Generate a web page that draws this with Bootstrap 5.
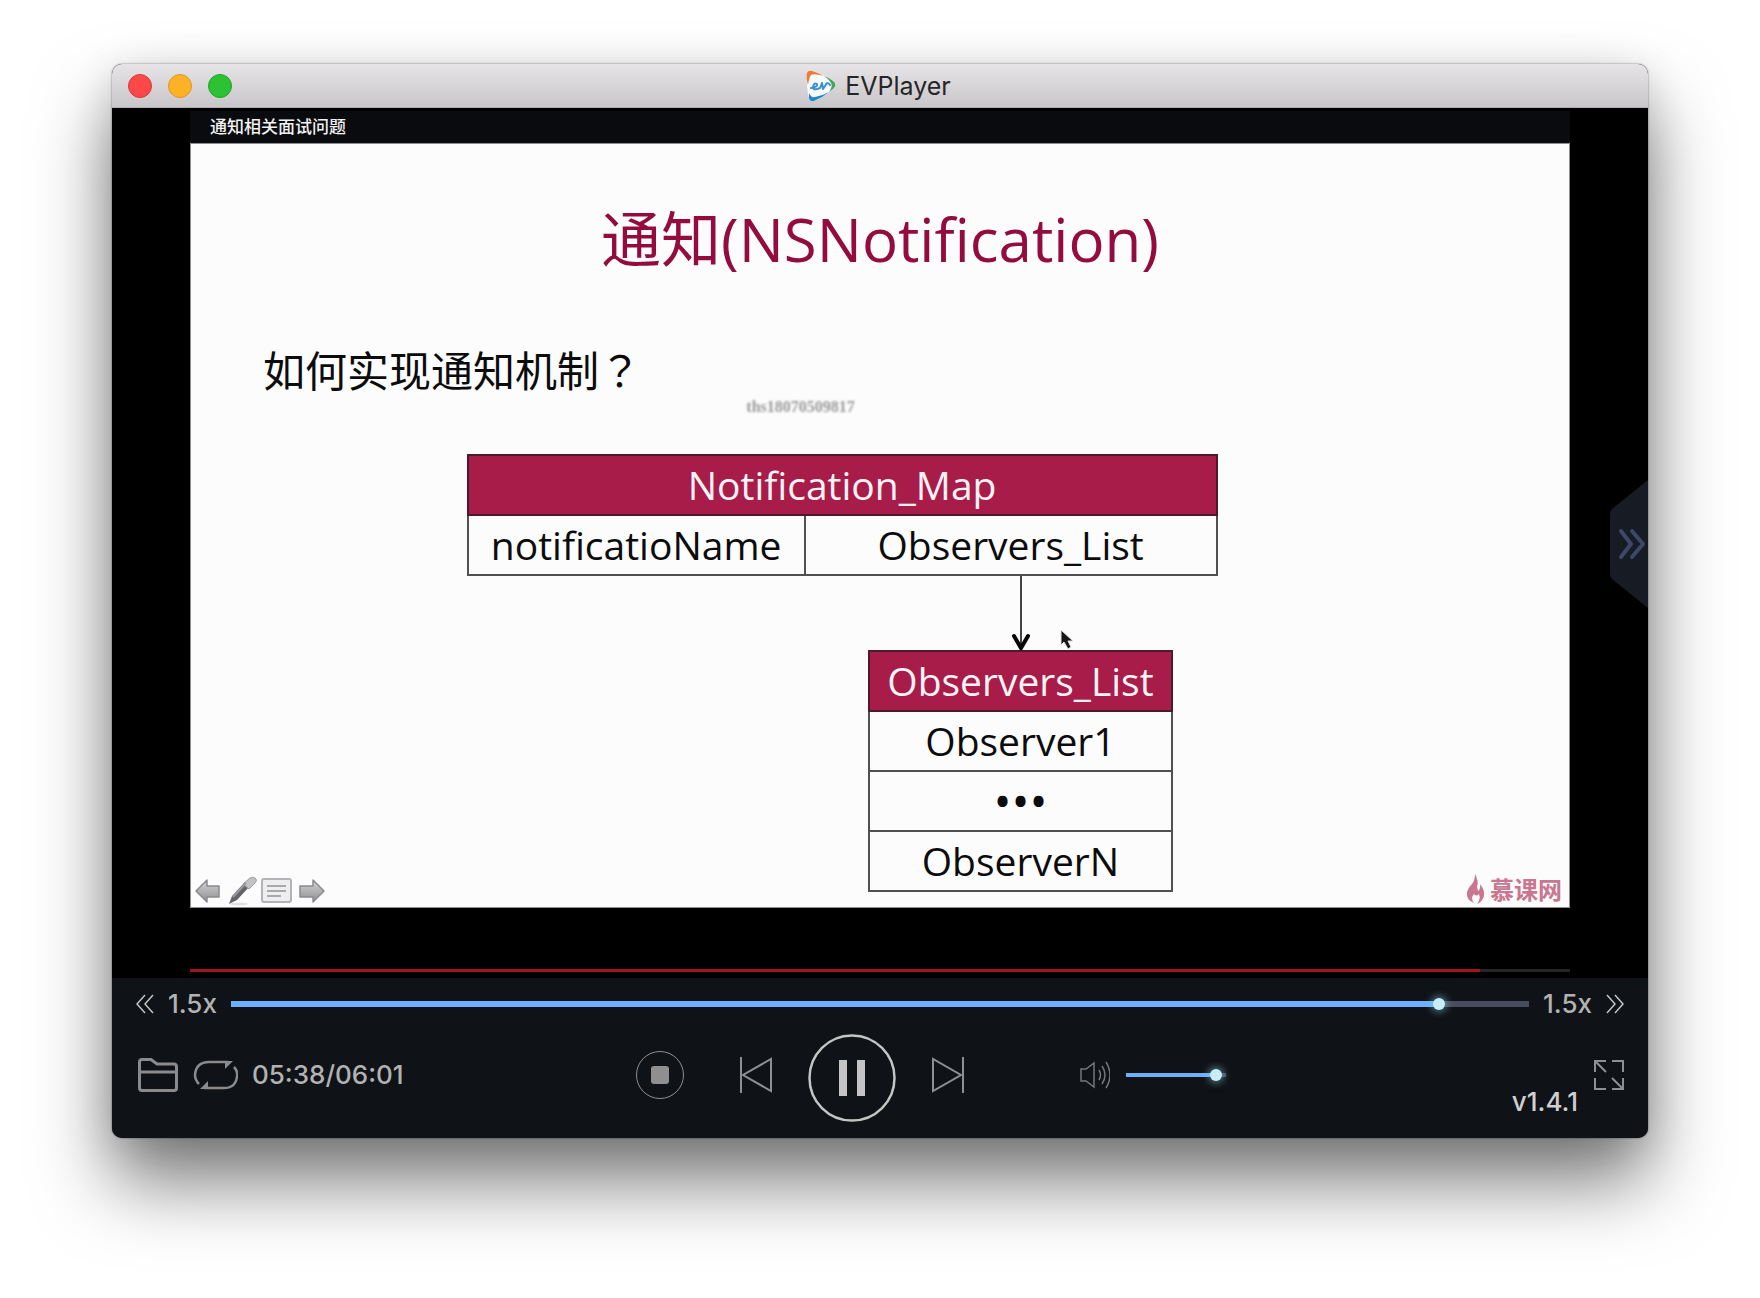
<!DOCTYPE html>
<html lang="zh-CN">
<head>
<meta charset="utf-8">
<meta name="viewport" content="width=device-width, initial-scale=1">
<title>EVPlayer</title>
<link rel="stylesheet" href="https://cdn.jsdelivr.net/npm/bootstrap@5.3.0/dist/css/bootstrap.min.css">
<style>
  body { background: #fff; font-family: Inter, "Noto Sans CJK SC", sans-serif; }
  .stage { min-height: 100vh; padding: 64px 112px 96px; }
  .player { border-radius: 10px; overflow: hidden; background: #000; }
  .player-shadow { border-radius: 10px; box-shadow: 0 0 2px rgba(0,0,0,.55), 0 44px 76px rgba(0,0,0,.52), 0 6px 40px rgba(0,0,0,.12); }
  .titlebar { display: grid; grid-template-columns: 1fr auto 1fr; height: 44px; padding: 0 20px 0 16px; background: linear-gradient(#e6e4e7, #c9c6ca); border-bottom: 1px solid #aeacb0; }
  .light { width: 24px; height: 24px; border-radius: 50%; padding: 0; border: 1px solid; }
  .light-close { background: #fc4848; border-color: #df3636; }
  .light-min { background: #fdb226; border-color: #dd981c; }
  .light-zoom { background: #2bc233; border-color: #1fa527; }
  .app-name { font-size: 25px; line-height: 32px; color: #262626; }
  .screen { padding: 3px 78px 6px; }
  .caption-bar { background: #0a0b0e; color: #f2f2f2; font: 500 17px/30px "Noto Sans CJK SC", sans-serif; padding: 0 20px 2px; }
  .slide { background: #fcfcfd; border: 1px solid #8c8f90; color: #0c0c0c; font-family: "Open Sans", "Noto Sans CJK SC", sans-serif; padding: 55px 0 15px; }
  .slide-title { font-size: 60px; line-height: 80px; color: #940b3d; margin: 0 0 60px; font-weight: 400; }
  .slide-question { font-size: 42px; line-height: 60px; margin: 0 0 53px; padding-left: 72px; }
  .centered-mark { font-family: "Noto Sans CJK TC", sans-serif; }
  .watermark { left: 40.3%; top: 251px; font: bold 16px/24px "Liberation Serif", serif; color: #9a9a9a; filter: blur(1px); }
  .diagram { margin-left: 20%; width: 54.5%; }
  .sheet { width: 100%; table-layout: fixed; border-collapse: collapse; font-size: 39px; line-height: 52px; text-align: center; }
  .sheet th, .sheet td { height: 60px; padding: 0; border: 2px solid #505052; font-weight: 400; }
  .sheet th { background: #a71c48; color: #fdf3f7; border-color: #4b1a2c; }
  .sheet .dots { font-size: 48px; }
  .name-col { width: 45%; }
  .linked { margin-left: 53.5%; width: 40.5%; }
  .slide-tools { left: 3px; bottom: 1px; gap: 3px; }
  .tool { padding: 0; border: 0; background: none; line-height: 0; color: inherit; }
  .brand-mark { right: 7px; bottom: 2px; color: #c97690; font: bold 24px/32px "Noto Sans CJK SC", sans-serif; }
  .load-line { height: 3px; margin-top: 61px; border-radius: 0; background: #262628; }
  .load-line .progress-bar { background: #a0141c; }
  .side-tab { right: 0; top: 372px; }
  .controls { background: #0f1216; color: #b2b2b2; padding: 8px 24px 16px; font-size: 26px; font-weight: 500; line-height: 38px; }
  .seek-row { height: 36px; gap: 14px; }
  .deck { padding: 6px 0 0 2px; }
  .deck-left { flex: 5 1 0; gap: 14px; }
  .deck-right { flex: 4 1 0; gap: 16px; }
  .transport { gap: 36px; margin-right: 114px; }
  .stop-btn { margin-right: 20px; }
  .play-btn { margin-top: 6px; }
  .version { line-height: 40px; color: #cfcfcf; }
  .slider { appearance: none; -webkit-appearance: none; display: block; margin: 0; background: none; height: 24px; min-width: 0; }
  .slider::-webkit-slider-runnable-track { height: var(--track); background: linear-gradient(90deg, #6cb0fb var(--fill), #474d5e var(--fill)); }
  .slider::-webkit-slider-thumb { -webkit-appearance: none; width: 12px; height: 12px; margin-top: calc((var(--track) - 12px) / 2); border-radius: 50%; background: #c8ecf8; box-shadow: 0 0 8px 1px rgba(140,210,240,.7); }
  .seek { --track: 6px; --fill: 93%; }
  .volume { --track: 4px; --fill: 92%; width: 100px; }
</style>
<script src="https://cdn.jsdelivr.net/npm/bootstrap@5.3.0/dist/js/bootstrap.bundle.min.js"></script>
</head>
<body>
<div class="stage">
 <div class="player-shadow">
 <main class="player">
  <header class="titlebar align-items-center">
    <div class="d-flex gap-3">
      <button class="light light-close" type="button" aria-label="Close"></button>
      <button class="light light-min" type="button" aria-label="Minimize"></button>
      <button class="light light-zoom" type="button" aria-label="Zoom"></button>
    </div>
    <div class="d-flex align-items-center gap-2">
      <svg width="32" height="34" viewBox="0 0 32 34" aria-hidden="true">
        <path d="M2 5Q2 1 6 2Q19 5 28 12Q32 15 28 19Q20 28 9 32Q5 33 4 29Q1 17 2 5Z" fill="#f8fbfd"/>
        <path d="M3 16Q1 9 2 4Q3 1 7 2Q14 4 19 7Q9 4 6 6Q4 9 3 16Z" fill="#f07a35"/>
        <path d="M19 7Q25 9 28 12Q32 15 29 19L24 23Q28 17 26 14Q24 10 19 7Z" fill="#45a45a"/>
        <path d="M4 24Q6 29 10 28Q17 27 24 23Q17 29 9 32Q5 33 4 29Z" fill="#2186ca"/>
        <path d="M6 19Q13 18 12 15Q9 13 8 18Q8 22 15 19L17 14L18 20L22 14Q24 14 25 16" fill="none" stroke="#3a91cd" stroke-width="2" stroke-linecap="round" stroke-linejoin="round"/>
      </svg>
      <span class="app-name">EVPlayer</span>
    </div>
    <div></div>
  </header>

  <section class="screen position-relative">
    <div class="caption-bar">通知相关面试问题</div>
    <article class="slide position-relative">
      <h1 class="slide-title text-center">通知(NSNotification)</h1>
      <p class="slide-question">如何实现通知机制<span class="centered-mark" lang="zh-TW">？</span></p>
      <span class="watermark position-absolute">ths18070509817</span>
      <div class="diagram">
        <table class="sheet">
          <colgroup><col class="name-col"><col></colgroup>
          <thead><tr><th colspan="2">Notification_Map</th></tr></thead>
          <tbody><tr><td>notificatioName</td><td>Observers_List</td></tr></tbody>
        </table>
        <div class="linked d-flex flex-column align-items-center">
          <svg class="d-block" width="76" height="74" viewBox="-30 0 76 74" overflow="visible" aria-hidden="true">
            <path d="M9 0V71" stroke="#444" stroke-width="2"/>
            <path d="M2 60L9 72L16 60" fill="none" stroke="#080808" stroke-width="4" stroke-linecap="round" stroke-linejoin="miter"/>
            <path d="M49 54V69L52 66L56 73L59 71L56 65H61Z" fill="#161616" stroke="#e2e2e4" stroke-width="1"/>
          </svg>
          <table class="sheet">
            <thead><tr><th>Observers_List</th></tr></thead>
            <tbody>
              <tr><td>Observer1</td></tr>
              <tr><td class="dots">•••</td></tr>
              <tr><td>ObserverN</td></tr>
            </tbody>
          </table>
        </div>
      </div>
      <div class="slide-tools position-absolute d-flex align-items-center">
        <svg width="0" height="0" class="position-absolute" aria-hidden="true"><defs>
          <linearGradient id="metal" x2="0" y2="1"><stop stop-color="#d4d4d6"/><stop offset="1" stop-color="#8f8f92"/></linearGradient>
        </defs></svg>
        <button class="tool" type="button" aria-label="Previous slide"><svg width="28" height="28" viewBox="0 0 28 28"><path d="M2 14L13 3V9H25V20H13V25Z" fill="url(#metal)" stroke="#8a8a90" stroke-width="1.500" stroke-linejoin="round"/></svg></button>
        <button class="tool" type="button" aria-label="Pen"><svg width="32" height="30" viewBox="0 0 32 30"><ellipse cx="14" cy="28" rx="9" ry="1.500" fill="#e0e0e2"/><path d="M4 28L7 20L20 6L25 10L12 24Z" fill="#646468"/><path d="M18 8L25 2Q29 0 31 3Q32 5 30 7L24 13Z" fill="#c3c3c6" stroke="#9c9ca0"/><path d="M8 21L21 7" stroke="#9a9a9e" stroke-width="2"/></svg></button>
        <button class="tool" type="button" aria-label="Slide list"><svg width="32" height="28" viewBox="-1 0 32 28"><rect x="1" y="2" width="29" height="23" rx="2" fill="#eeeef0" stroke="#b3b3b7" stroke-width="2"/><path d="M6 9H25M6 14H25M6 19H20" stroke="#a9a9ad" stroke-width="2"/></svg></button>
        <button class="tool" type="button" aria-label="Next slide"><svg width="32" height="28" viewBox="-3 0 32 28"><path d="M26 14L15 3V9H2V20H15V25Z" fill="url(#metal)" stroke="#8a8a90" stroke-width="1.500" stroke-linejoin="round"/></svg></button>
      </div>
      <div class="brand-mark position-absolute d-flex align-items-center gap-1">
        <svg width="20" height="32" viewBox="0 0 20 32" aria-hidden="true"><path d="M9 1Q13 8 11 14L12 18Q15 16 14 11Q19 17 18 23Q17 28 11 31Q15 26 13 21Q10 24 8 21Q4 25 8 30Q0 27 1 19Q2 15 6 11Q9 7 9 1Z" fill="currentColor"/></svg>
        <span>慕课网</span>
      </div>
    </article>
    <div class="progress load-line" role="progressbar" aria-label="Buffered" aria-valuenow="93"><div class="progress-bar" style="width:93.500%"></div></div>
    <button class="tool side-tab position-absolute" type="button" aria-label="Open playlist">
      <svg width="38" height="128" viewBox="0 0 38 128"><path d="M38 0V128L2 99Q0 97 0 95V34Q0 31 2 29Z" fill="#171b24"/><path d="M11 51L21 64L11 77M22 51L33 64L22 77" fill="none" stroke="#3d4768" stroke-width="4" stroke-linecap="round" stroke-linejoin="round"/></svg>
    </button>
  </section>

  <footer class="controls">
    <div class="seek-row d-flex align-items-center">
      <button class="tool" type="button" aria-label="Slower"><svg width="18" height="20" viewBox="0 0 18 20"><path d="M9 1L1 10L9 19M17 1L9 10L17 19" fill="none" stroke="#c4c4c4" stroke-width="1.500"/></svg></button>
      <span>1.5x</span>
      <input class="slider seek flex-grow-1" type="range" min="0" max="1000" value="935" aria-label="Position">
      <span>1.5x</span>
      <button class="tool" type="button" aria-label="Faster"><svg width="18" height="20" viewBox="0 0 18 20"><path d="M1 1L9 10L1 19M9 1L17 10L9 19" fill="none" stroke="#c4c4c4" stroke-width="1.500"/></svg></button>
    </div>
    <div class="deck d-flex align-items-center">
      <div class="deck-left d-flex align-items-center">
        <button class="tool" type="button" aria-label="Open file"><svg width="40" height="34" viewBox="0 0 40 34"><path d="M1.500 30V4Q1.500 1.500 4 1.500H13L19 6H36Q38.500 6 38.500 9V30Q38.500 32.500 36 32.500H4Q1.500 32.500 1.500 30ZM2 14H38" fill="none" stroke="#8b8b8d" stroke-width="3"/></svg></button>
        <button class="tool" type="button" aria-label="Repeat"><svg width="46" height="30" viewBox="-2 0 46 30"><path d="M5 24Q1 20 1 15Q2 2 15 2H34M40 7Q44 11 43 16Q42 28 30 28H10" fill="none" stroke="#8b8b8d" stroke-width="2.500"/><path d="M39 1L31 9V1ZM6 29L14 21V29Z" fill="#8b8b8d"/></svg></button>
        <span>05:38/06:01</span>
      </div>
      <div class="transport d-flex align-items-center">
        <button class="tool stop-btn" type="button" aria-label="Stop"><svg width="48" height="48" viewBox="0 0 48 48"><circle cx="24" cy="24" r="23.500" fill="none" stroke="#8f8f91"/><rect x="15" y="15" width="18" height="18" rx="3" fill="#8f8f91"/></svg></button>
        <button class="tool" type="button" aria-label="Previous"><svg width="32" height="36" viewBox="0 0 32 36"><path d="M1 0V36M31 2V34L3 18Z" fill="none" stroke="#8f8f91" stroke-width="2"/></svg></button>
        <button class="tool play-btn" type="button" aria-label="Pause"><svg width="88" height="88" viewBox="0 0 88 88"><circle cx="44" cy="44" r="42.500" fill="none" stroke="#c4c4c4" stroke-width="2.500"/><path d="M31 26H39V62H31ZM49 26H57V62H49Z" fill="#c4c4c4"/></svg></button>
        <button class="tool" type="button" aria-label="Next"><svg width="32" height="36" viewBox="0 0 32 36"><path d="M31 0V36M1 2V34L29 18Z" fill="none" stroke="#8f8f91" stroke-width="2"/></svg></button>
      </div>
      <div class="d-flex align-items-center gap-3">
        <svg width="32" height="28" viewBox="-2 0 32 28" aria-hidden="true"><path d="M1 8H6L14 2V26L6 20H1ZM19 9Q22 14 19 19M22 5Q28 14 22 23M26 1Q34 14 26 27" fill="none" stroke="#77777a" stroke-width="1.500"/></svg>
        <input class="slider volume" type="range" min="0" max="100" value="96" aria-label="Volume">
      </div>
      <div class="deck-right d-flex align-items-center align-self-stretch justify-content-end">
        <span class="version align-self-end">v1.4.1</span>
        <button class="tool" type="button" aria-label="Full screen"><svg width="30" height="30" viewBox="0 0 30 30"><path d="M12 1H1V12M1 1L12 12M18 1H29V12M1 18V29H12M29 18V29H18M29 29L18 18" fill="none" stroke="#8f8f91" stroke-width="2"/></svg></button>
      </div>
    </div>
  </footer>
 </main>
 </div>
</div>
</body>
</html>
